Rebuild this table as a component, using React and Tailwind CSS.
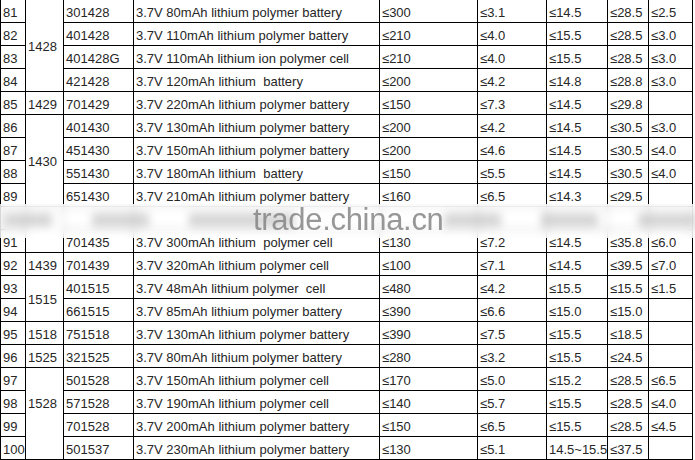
const rows = [
  ['81', { t: '1428', rs: 4 }, '301428', '3.7V 80mAh lithium polymer battery', '≤300', '≤3.1', '≤14.5', '≤28.5', '≤2.5'],
  ['82', null, '401428', '3.7V 110mAh lithium polymer battery', '≤210', '≤4.0', '≤15.5', '≤28.5', '≤3.0'],
  ['83', null, '401428G', '3.7V 110mAh lithium ion polymer cell', '≤210', '≤4.0', '≤15.5', '≤28.5', '≤3.0'],
  ['84', null, '421428', '3.7V 120mAh lithium  battery', '≤200', '≤4.2', '≤14.8', '≤28.8', '≤3.0'],
  ['85', { t: '1429', rs: 1 }, '701429', '3.7V 220mAh lithium polymer battery', '≤150', '≤7.3', '≤14.5', '≤29.8', ''],
  ['86', { t: '1430', rs: 4 }, '401430', '3.7V 130mAh lithium polymer battery', '≤200', '≤4.2', '≤14.5', '≤30.5', '≤3.0'],
  ['87', null, '451430', '3.7V 150mAh lithium polymer battery', '≤200', '≤4.6', '≤14.5', '≤30.5', '≤4.0'],
  ['88', null, '551430', '3.7V 180mAh lithium  battery', '≤150', '≤5.5', '≤14.5', '≤30.5', '≤4.0'],
  ['89', null, '651430', '3.7V 210mAh lithium polymer battery', '≤160', '≤6.5', '≤14.3', '≤29.5', ''],
  ['90', { t: '', rs: 2 }, '', '', '', '', '', '', ''],
  ['91', null, '701435', '3.7V 300mAh lithium  polymer cell', '≤130', '≤7.2', '≤14.5', '≤35.8', '≤6.0'],
  ['92', { t: '1439', rs: 1 }, '701439', '3.7V 320mAh lithium polymer cell', '≤100', '≤7.1', '≤14.5', '≤39.5', '≤7.0'],
  ['93', { t: '1515', rs: 2 }, '401515', '3.7V 48mAh lithium polymer  cell', '≤480', '≤4.2', '≤15.5', '≤15.5', '≤1.5'],
  ['94', null, '661515', '3.7V 85mAh lithium polymer battery', '≤390', '≤6.6', '≤15.0', '≤15.0', ''],
  ['95', { t: '1518', rs: 1 }, '751518', '3.7V 130mAh lithium polymer battery', '≤390', '≤7.5', '≤15.5', '≤18.5', ''],
  ['96', { t: '1525', rs: 1 }, '321525', '3.7V 80mAh lithium polymer battery', '≤280', '≤3.2', '≤15.5', '≤24.5', ''],
  ['97', { t: '1528', rs: 4, up: true }, '501528', '3.7V 150mAh lithium polymer cell', '≤170', '≤5.0', '≤15.2', '≤28.5', '≤6.5'],
  ['98', null, '571528', '3.7V 190mAh lithium polymer cell', '≤140', '≤5.7', '≤15.5', '≤28.5', '≤4.0'],
  ['99', null, '701528', '3.7V 200mAh lithium polymer battery', '≤150', '≤6.5', '≤15.5', '≤28.5', '≤4.5'],
  ['100', null, '501537', '3.7V 230mAh lithium polymer battery', '≤130', '≤5.1', '14.5~15.5', '≤37.5', ''],
];

const widths = [25, 38, 70, 246, 98, 69, 61, 41, 44];

const cell = 'border border-black h-[23px] p-0 pl-[2px] pt-[2px] whitespace-pre overflow-hidden align-middle';

export default function App() {
  return (
    <div
      className="relative w-[695px] h-[460px] overflow-hidden bg-white text-[13px] leading-[15px] text-[#262626]"
      style={{ fontFamily: '"Liberation Sans", Arial, sans-serif' }}
    >
      <table className="-mt-px w-[693px] table-fixed border-collapse">
        <colgroup>
          {widths.map((w, i) => (
            <col key={i} style={{ width: w }} />
          ))}
        </colgroup>
        <tbody>
          {rows.map((r) => (
            <tr key={r[0]}>
              <td className={cell}>{r[0] === '90' ? '' : r[0]}</td>
              {r[1] && (
                <td rowSpan={r[1].rs} className={cell + (r[1].up ? ' pb-[23px]' : '')}>
                  {r[1].t}
                </td>
              )}
              {r.slice(2).map((v, i) => (
                <td key={i} className={cell}>
                  {v}
                </td>
              ))}
            </tr>
          ))}
        </tbody>
      </table>

      {/* watermark band, blurred over row 90 */}
      <div className="absolute left-0 right-0 top-[204px] h-[34px] bg-white/75 backdrop-blur-[4px]" />
      <div className="absolute left-0 right-0 top-[213px] h-[14px] flex gap-[40px] pl-[4px] blur-[4px] opacity-40">
        <div className="w-[50px] bg-[#9a9a9a]" />
        <div className="w-[60px] bg-[#9a9a9a]" />
        <div className="w-[110px] bg-[#9a9a9a]" />
        <div className="w-[60px] bg-[#9a9a9a] ml-[110px]" />
        <div className="w-[60px] bg-[#9a9a9a]" />
        <div className="w-[60px] bg-[#9a9a9a]" />
      </div>
      <div className="absolute left-[253px] top-[207px] text-[31px] leading-[26px] text-[#858585]/85 tracking-[-0.3px]">
        trade.china.cn
      </div>
    </div>
  );
}
